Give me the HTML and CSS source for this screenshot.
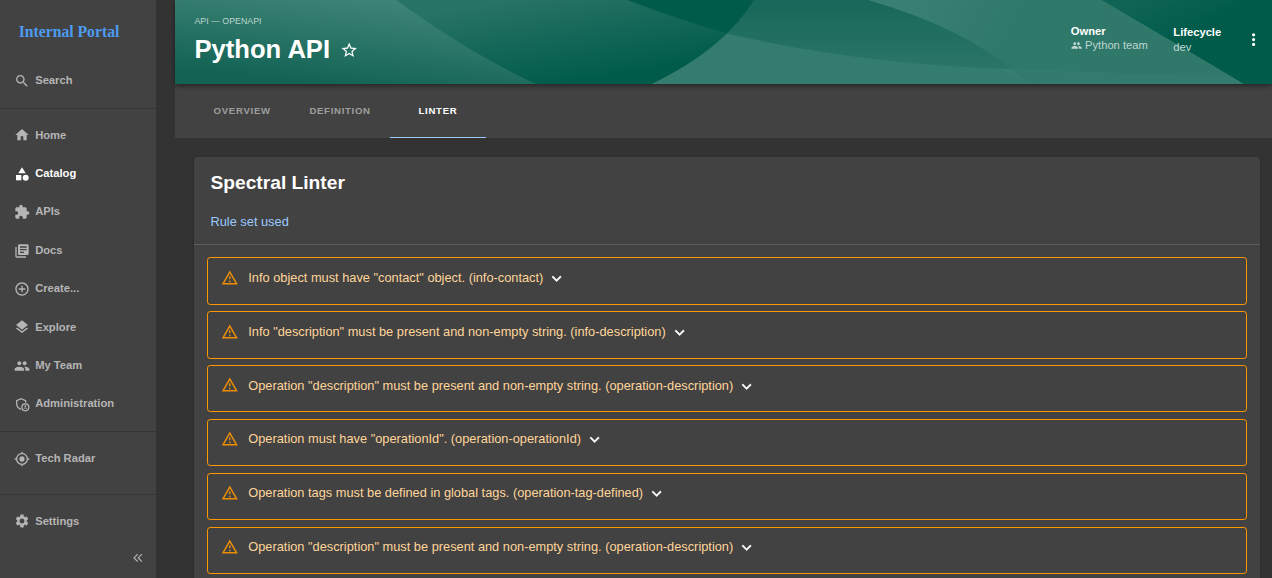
FILE: index.html
```html
<!DOCTYPE html>
<html lang="en">
<head>
<meta charset="utf-8">
<title>Python API</title>
<link rel="stylesheet" href="styles.css">
</head>
<body>
<div class="app">
  <nav class="sidebar">
    <div class="logo">Internal Portal</div>
    <a class="item"><svg class="icon" viewBox="0 0 24 24"><path d="M15.5 14h-.79l-.28-.27C15.41 12.59 16 11.11 16 9.5 16 5.91 13.09 3 9.5 3S3 5.91 3 9.5 5.91 16 9.5 16c1.61 0 3.09-.59 4.23-1.57l.27.28v.79l5 4.99L20.49 19l-4.99-5zm-6 0C7.01 14 5 11.99 5 9.5S7.01 5 9.5 5 14 7.01 14 9.5 11.99 14 9.5 14z"/></svg>Search</a>
    <hr class="divider">
    <a class="item"><svg class="icon" viewBox="0 0 24 24"><path d="M10 20v-6h4v6h5v-8h3L12 3 2 12h3v8z"/></svg>Home</a>
    <a class="item active"><svg class="icon" viewBox="0 0 24 24"><path d="M12 2l-5.500 9h11z"/><circle cx="17.500" cy="17.500" r="4.500"/><path d="M3 13.500h8v8H3z"/></svg>Catalog</a>
    <a class="item"><svg class="icon" viewBox="0 0 24 24"><path d="M20.500 11H19V7c0-1.100-.9-2-2-2h-4V3.500C13 2.120 11.880 1 10.500 1S8 2.120 8 3.500V5H4c-1.100 0-1.990.9-1.990 2v3.800H3.500c1.490 0 2.700 1.210 2.700 2.700s-1.210 2.700-2.700 2.700H2V20c0 1.100.9 2 2 2h3.800v-1.500c0-1.490 1.210-2.700 2.700-2.700 1.490 0 2.700 1.210 2.700 2.700V22H17c1.100 0 2-.9 2-2v-4h1.500c1.380 0 2.500-1.120 2.500-2.500S21.880 11 20.500 11z"/></svg>APIs</a>
    <a class="item"><svg class="icon" viewBox="0 0 24 24"><path d="M4 6H2v14c0 1.100.9 2 2 2h14v-2H4V6zm16-4H8c-1.100 0-2 .9-2 2v12c0 1.100.9 2 2 2h12c1.100 0 2-.9 2-2V4c0-1.100-.9-2-2-2zm-1 9H9V9h10v2zm-4 4H9v-2h6v2zm4-8H9V5h10v2z"/></svg>Docs</a>
    <a class="item"><svg class="icon" viewBox="0 0 24 24"><path d="M13 7h-2v4H7v2h4v4h2v-4h4v-2h-4V7zm-1-5C6.480 2 2 6.480 2 12s4.480 10 10 10 10-4.480 10-10S17.520 2 12 2zm0 18c-4.410 0-8-3.590-8-8s3.590-8 8-8 8 3.590 8 8-3.590 8-8 8z"/></svg>Create...</a>
    <a class="item"><svg class="icon" viewBox="0 0 24 24"><path d="M11.990 18.540l-7.370-5.730L3 14.070l9 7 9-7-1.630-1.270-7.380 5.740zM12 16l7.360-5.730L21 9l-9-7-9 7 1.630 1.270L12 16z"/></svg>Explore</a>
    <a class="item"><svg class="icon" viewBox="0 0 24 24"><use href="#people"/></svg>My Team</a>
    <a class="item"><svg class="icon outline" viewBox="0 0 24 24"><path d="M17.500 10V6.900L10.500 4 4 6.900v4.500c0 3.900 2.700 7.500 6.700 8.500"/><circle cx="17" cy="17" r="5.200"/><circle class="solid" cx="17" cy="15.400" r="1.400"/><path class="thin" d="M14.600 19.200c1-1.400 3.800-1.400 4.800 0"/></svg>Administration</a>
    <hr class="divider">
    <a class="item"><svg class="icon" viewBox="0 0 24 24"><path d="M12 8c-2.210 0-4 1.790-4 4s1.790 4 4 4 4-1.790 4-4-1.790-4-4-4zm8.940 3c-.46-4.170-3.770-7.480-7.940-7.940V1h-2v2.060C6.830 3.520 3.520 6.830 3.060 11H1v2h2.060c.46 4.170 3.770 7.480 7.940 7.940V23h2v-2.060c4.170-.46 7.480-3.770 7.940-7.940H23v-2h-2.060zM12 19c-3.870 0-7-3.130-7-7s3.130-7 7-7 7 3.130 7 7-3.130 7-7 7z"/></svg>Tech Radar</a>
    <hr class="divider spaced">
    <a class="item settings"><svg class="icon" viewBox="0 0 24 24"><path d="M19.140 12.940c.04-.3.06-.61.06-.94 0-.32-.02-.64-.07-.94l2.030-1.580c.18-.14.23-.41.12-.61l-1.920-3.320c-.12-.22-.37-.29-.59-.22l-2.390.96c-.5-.38-1.030-.7-1.620-.94l-.36-2.540c-.04-.24-.24-.41-.48-.41h-3.840c-.24 0-.43.17-.47.41l-.36 2.540c-.59.24-1.130.57-1.620.94l-2.390-.96c-.22-.08-.47 0-.59.22L2.740 8.870c-.12.21-.08.47.12.61l2.030 1.580c-.05.3-.09.63-.09.94s.02.64.07.94l-2.030 1.580c-.18.14-.23.41-.12.61l1.920 3.320c.12.22.37.29.59.22l2.390-.96c.5.38 1.030.7 1.620.94l.36 2.540c.05.24.24.41.48.41h3.840c.24 0 .44-.17.47-.41l.36-2.540c.59-.24 1.130-.56 1.620-.94l2.390.96c.22.08.47 0 .59-.22l1.920-3.320c.12-.22.07-.47-.12-.61l-2.010-1.580zM12 15.600c-1.980 0-3.600-1.620-3.600-3.600s1.620-3.600 3.600-3.600 3.600 1.620 3.600 3.600-1.620 3.600-3.600 3.600z"/></svg>Settings</a>
    <svg class="collapse" viewBox="0 0 10 10"><path d="M4.700 1.200L1.100 4.900l3.600 3.700M8.900 1.200L5.300 4.900l3.600 3.700"/></svg>
  </nav>

  <main class="page">
    <header class="header">
      <svg class="waves" viewBox="0 0 1097 84" preserveAspectRatio="none">
        <defs>
          <linearGradient id="g-left" gradientUnits="userSpaceOnUse" x1="200" y1="0" x2="190" y2="90"><stop offset="0" stop-color="#3e8476"/><stop offset="1" stop-color="#126354"/></linearGradient>
          <linearGradient id="g-mid" gradientUnits="userSpaceOnUse" x1="370" y1="-5" x2="385" y2="86"><stop offset="0" stop-color="#277364"/><stop offset="1" stop-color="#005b4b"/></linearGradient>
          <linearGradient id="g-upper" x1="0" y1="0" x2="0" y2="1"><stop offset="0" stop-color="#17685a"/><stop offset="1" stop-color="#2f7869"/></linearGradient>
          <linearGradient id="g-right" gradientUnits="userSpaceOnUse" x1="740" y1="0" x2="900" y2="84"><stop offset="0" stop-color="#398072"/><stop offset=".6" stop-color="#2e7869"/><stop offset="1" stop-color="#2f786a"/></linearGradient>
          <linearGradient id="g-corner" gradientUnits="userSpaceOnUse" x1="960" y1="0" x2="985" y2="50"><stop offset="0" stop-color="#106455"/><stop offset="1" stop-color="#005b4b"/></linearGradient>
          <symbol id="people" viewBox="0 0 24 24"><path d="M16 11c1.660 0 2.990-1.340 2.990-3S17.660 5 16 5c-1.660 0-3 1.340-3 3s1.340 3 3 3zm-8 0c1.660 0 2.990-1.340 2.990-3S9.660 5 8 5C6.340 5 5 6.340 5 8s1.340 3 3 3zm0 2c-2.330 0-7 1.170-7 3.500V19h14v-2.500c0-2.330-4.670-3.500-7-3.500zm8 0c-.29 0-.62.02-.97.05 1.160.84 1.970 1.970 1.970 3.450V19h6v-2.500c0-2.330-4.670-3.500-7-3.500z"/></symbol>
        </defs>
        <path fill="#005b4b" d="M0 0h1097v84H0z"/>
        <path fill="url(#g-mid)" d="M0 0H452Q505 20 552 33.500Q524 61 477 84H0z"/>
        <path fill="url(#g-left)" d="M0 0H221Q294 53 361 84H0z"/>
        <path fill="url(#g-upper)" d="M579 0H927L1069 84H477Q548 50 579 0z"/>
        <path fill="#347c6e" d="M552 33.500Q690 66 860 70V84H477Q524 61 552 33.500z"/>
        <path fill="url(#g-right)" d="M693 0H927L1069 84H853Q800 31 693 0z"/>
        <path fill="#fff" fill-opacity=".025" d="M820 68Q930 73 1055 76L1069 84H853Q842 74 820 68z"/>
        <path fill="url(#g-corner)" d="M927 0H1097V84H1069Q1000 40 927 0z"/>
      </svg>
      <div class="heading">
        <div class="type">API — OPENAPI</div>
        <h1 class="title">Python API
          <svg class="star" viewBox="0 0 24 24"><path d="M22 9.240l-7.190-.62L12 2 9.190 8.630 2 9.240l5.460 4.730L5.820 21 12 17.270 18.180 21l-1.630-7.030L22 9.240zM12 15.400l-3.760 2.270 1-4.280-3.320-2.880 4.380-.38L12 6.100l1.710 4.040 4.380.38-3.320 2.880 1 4.280L12 15.400z"/></svg>
        </h1>
      </div>
      <dl class="facts owner"><dt>Owner</dt><dd><svg class="team" viewBox="0 0 24 24"><use href="#people"/></svg>Python team</dd></dl>
      <dl class="facts lifecycle"><dt>Lifecycle</dt><dd>dev</dd></dl>
      <svg class="more" viewBox="0 0 24 24"><path d="M12 8c1.100 0 2-.9 2-2s-.9-2-2-2-2 .9-2 2 .9 2 2 2zm0 2c-1.100 0-2 .9-2 2s.9 2 2 2 2-.9 2-2-.9-2-2-2zm0 6c-1.100 0-2 .9-2 2s.9 2 2 2 2-.9 2-2-.9-2-2-2z"/></svg>
    </header>

    <div class="tabs">
      <a class="tab">OVERVIEW</a>
      <a class="tab">DEFINITION</a>
      <a class="tab selected">LINTER</a>
    </div>

    <section class="card">
      <div class="card-head">
        <h2 class="card-title">Spectral Linter</h2>
        <a class="rules">Rule set used</a>
      </div>
      <div class="alerts">
        <div class="alert"><svg class="warn" viewBox="0 0 24 24"><use href="#warning"/></svg>Info object must have "contact" object. (info-contact)<svg class="chevron" viewBox="0 0 24 24"><use href="#more"/></svg></div>
        <div class="alert"><svg class="warn" viewBox="0 0 24 24"><use href="#warning"/></svg>Info "description" must be present and non-empty string. (info-description)<svg class="chevron" viewBox="0 0 24 24"><use href="#more"/></svg></div>
        <div class="alert"><svg class="warn" viewBox="0 0 24 24"><use href="#warning"/></svg>Operation "description" must be present and non-empty string. (operation-description)<svg class="chevron" viewBox="0 0 24 24"><use href="#more"/></svg></div>
        <div class="alert"><svg class="warn" viewBox="0 0 24 24"><use href="#warning"/></svg>Operation must have "operationId". (operation-operationId)<svg class="chevron" viewBox="0 0 24 24"><use href="#more"/></svg></div>
        <div class="alert"><svg class="warn" viewBox="0 0 24 24"><use href="#warning"/></svg>Operation tags must be defined in global tags. (operation-tag-defined)<svg class="chevron" viewBox="0 0 24 24"><use href="#more"/></svg></div>
        <div class="alert"><svg class="warn" viewBox="0 0 24 24"><symbol id="warning" viewBox="0 0 24 24"><path d="M12 5.990L19.530 19H4.470L12 5.990M12 2L1 21h22L12 2zm1 14h-2v2h2v-2zm0-6h-2v4h2v-4z"/></symbol><symbol id="more" viewBox="0 0 24 24"><path d="M16.590 8.590L12 13.170 7.410 8.590 6 10l6 6 6-6z"/></symbol><use href="#warning"/></svg>Operation "description" must be present and non-empty string. (operation-description)<svg class="chevron" viewBox="0 0 24 24"><use href="#more"/></svg></div>
      </div>
    </section>
  </main>
</div>
</body>
</html>
```

FILE: styles.css
```css
* { box-sizing: border-box; }

body {
  margin: 0;
  background: #333;
  color: #fff;
  font-family: "Liberation Sans", Arial, sans-serif;
  overflow: hidden;
}

svg { fill: currentColor; flex: none; }

.app { display: flex; gap: 19px; height: 578px; }

/* Sidebar */
.sidebar {
  width: 156px;
  flex: none;
  display: flex;
  flex-direction: column;
  background: #424242;
  color: #b5b5b5;
}

.logo {
  height: 61.050px;
  padding: 23px 0 0 18.700px;
  color: #4d9bf0;
  font: bold 15.700px/18px "Liberation Serif", "Times New Roman", serif;
}

.item {
  display: flex;
  align-items: center;
  height: 38.400px;
  padding-left: 14px;
  gap: 5.200px;
  font-size: 11.200px;
  font-weight: bold;
  line-height: 14px;
}

.item.active { color: #fff; }

.icon { width: 16px; height: 16px; margin-top: 1.600px; }
.outline { fill: none; stroke: currentColor; stroke-width: 1.900; }
.outline .solid { fill: currentColor; stroke: none; }
.outline .thin { stroke-width: 1.400; }

.divider {
  width: 100%;
  height: 1px;
  margin: 8.200px 0 6.800px;
  border: 0;
  background: #363636;
}

.divider.spaced { margin: 17px 0 6.800px; }
.settings .icon { margin-top: 0; }

.collapse {
  align-self: flex-end;
  width: 10px;
  height: 10px;
  margin: 12.600px 12.700px 0 0;
  fill: none;
  stroke: #b5b5b5;
  stroke-width: 1.200;
}

/* Page header */
.page { flex: 1; min-width: 0; }

.header {
  position: relative;
  z-index: 1;
  display: flex;
  height: 84px;
  padding: 0 9px 0 19.500px;
  box-shadow: 0 2px 5px rgba(0, 0, 0, .45);
}

.waves { position: absolute; inset: 0; width: 100%; height: 100%; z-index: -1; }

.heading { flex: 1; padding-top: 15px; }

.type { font-size: 8.800px; line-height: 12px; color: #bdd5d0; }

.title {
  display: flex;
  align-items: center;
  gap: 10.400px;
  margin: 6px 0 0;
  font-size: 25.600px;
  line-height: 32px;
}

.star { width: 18.400px; height: 18.400px; margin-top: 1.400px; }

.facts { margin: 0; font-size: 11.200px; line-height: 14px; }
.facts dt { font-weight: bold; }
.facts dd { display: flex; align-items: center; margin: 0; color: #bfd6d1; }
.owner { width: 102.500px; padding-top: 24px; }
.lifecycle { width: 70.500px; padding-top: 25px; }
.lifecycle dd { margin-top: 1px; }
.team { width: 11.200px; height: 11.200px; margin: 1.400px 3px 0 0; }
.more { width: 19.200px; height: 19.200px; margin-top: 30px; }

/* Tabs */
.tabs {
  display: flex;
  height: 54px;
  padding-left: 19.200px;
  background: #424242;
}

.tab {
  display: flex;
  align-items: center;
  justify-content: center;
  min-width: 96px;
  padding: 0 19.200px 1px;
  color: #9e9e9e;
  font-size: 9.600px;
  font-weight: bold;
  letter-spacing: .7px;
}

.tab.selected { color: #fff; border-bottom: 1px solid #9cc9ff; padding-bottom: 0; }

/* Linter card */
.card {
  margin: 19px 12px 0 19px;
  height: 440px;
  background: #424242;
  border-radius: 3px;
  box-shadow: 0 1px 3px rgba(0, 0, 0, .25);
}

.card-head {
  height: 88px;
  padding: 15px 16.500px 0;
  border-bottom: 1px solid #5e5e5e;
}

.card-title { margin: 0; font-size: 19.200px; line-height: 22px; }

.rules {
  display: block;
  margin-top: 20px;
  color: #9cc9ff;
  font-size: 12.800px;
  line-height: 16px;
}

.alerts {
  display: flex;
  flex-direction: column;
  gap: 6.450px;
  padding: 12.420px 13px 0;
}

.alert {
  display: flex;
  flex: none;
  align-items: flex-start;
  height: 47.400px;
  padding: 10.480px 12.800px 0;
  border: 1px solid #ff9800;
  border-radius: 3.200px;
  color: #ffd599;
  font-size: 12.800px;
  line-height: 18px;
}

.warn { width: 17.600px; height: 17.600px; margin: -.2px 9.900px 0 0; color: #ff9800; opacity: .9; }
.chevron { width: 19.200px; height: 19.200px; margin-left: 4px; color: #fff; stroke: currentColor; stroke-width: .4; }
```
